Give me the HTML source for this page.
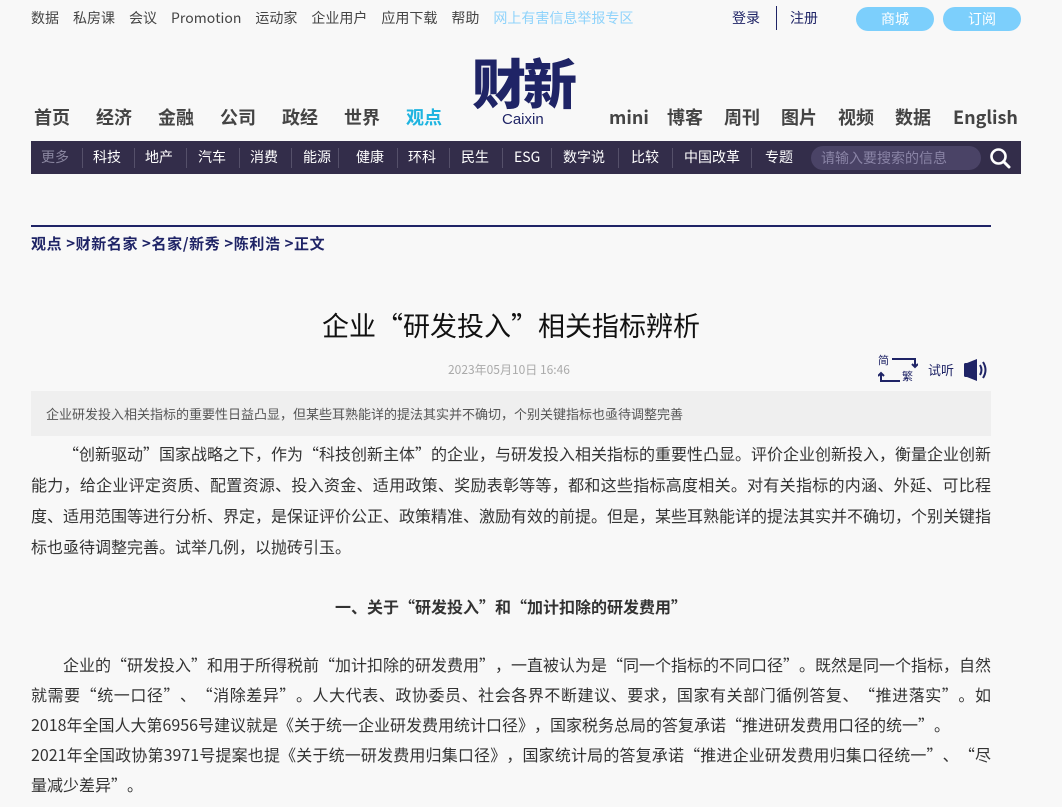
<!DOCTYPE html>
<html><head><meta charset="utf-8">
<style>
*{margin:0;padding:0;box-sizing:border-box}
body{width:1062px;height:807px;overflow:hidden;background:#f8f8f8;font-family:"Noto Sans CJK SC","Liberation Sans",sans-serif;color:#333;position:relative;text-spacing-trim:space-all;font-kerning:none}
.a{position:absolute;white-space:nowrap}
.top{top:8px;left:31px;font-size:14px;line-height:20px;color:#444}
.top span{margin-right:14px}
.logo{left:472px;top:50px;font-size:54px;font-weight:900;color:#1f2466;letter-spacing:-3px;line-height:62px}
.cx{left:502px;top:110px;font-size:15px;line-height:20px;color:#1f2466;font-family:"Liberation Sans",sans-serif}
.mn{top:105px;font-size:18px;line-height:24px;font-weight:bold;color:#444}
.bar{left:31px;top:141px;width:990px;height:33px;background:#332d4a}
.bar .it{position:absolute;top:0;line-height:33px;font-size:14px;color:#fff}
.sep{position:absolute;top:7px;width:1px;height:20px;background:#55506a}
.btn{top:7px;width:78px;height:24px;border-radius:12px;background:#7ccffc;color:#fff;font-size:14px;text-align:center;line-height:24px}
p.t{position:absolute;left:31px;width:960px;font-size:16px;text-align:justify;color:#333}
</style></head><body>
<div class="a top"><span>数据</span><span>私房课</span><span>会议</span><span>Promotion</span><span>运动家</span><span>企业用户</span><span>应用下载</span><span>帮助</span><span style="color:#8fd3fb">网上有害信息举报专区</span></div>
<div class="a" style="left:732px;top:8px;font-size:14px;line-height:20px;color:#1f2466">登录</div>
<div class="a" style="left:776px;top:6px;width:1px;height:24px;background:#1f2466"></div>
<div class="a" style="left:790px;top:8px;font-size:14px;line-height:20px;color:#1f2466">注册</div>
<div class="a btn" style="left:856px">商城</div>
<div class="a btn" style="left:943px">订阅</div>
<div class="a logo">财新</div>
<div class="a cx">Caixin</div>
<div class="a mn" style="left:34px">首页</div>
<div class="a mn" style="left:96px">经济</div>
<div class="a mn" style="left:158px">金融</div>
<div class="a mn" style="left:220px">公司</div>
<div class="a mn" style="left:282px">政经</div>
<div class="a mn" style="left:344px">世界</div>
<div class="a mn" style="left:406px;color:#1fb4e0">观点</div>
<div class="a mn" style="left:609px">mini</div>
<div class="a mn" style="left:667px">博客</div>
<div class="a mn" style="left:724px">周刊</div>
<div class="a mn" style="left:781px">图片</div>
<div class="a mn" style="left:838px">视频</div>
<div class="a mn" style="left:895px">数据</div>
<div class="a mn" style="left:953px">English</div>
<div class="a bar">
<span class="it" style="left:10px;color:#8a86a0">更多</span><i class="sep" style="left:51px"></i>
<span class="it" style="left:62px">科技</span><i class="sep" style="left:103px"></i>
<span class="it" style="left:114px">地产</span><i class="sep" style="left:155px"></i>
<span class="it" style="left:167px">汽车</span><i class="sep" style="left:208px"></i>
<span class="it" style="left:219px">消费</span><i class="sep" style="left:260px"></i>
<span class="it" style="left:272px">能源</span><i class="sep" style="left:307px"></i>
<span class="it" style="left:325px">健康</span><i class="sep" style="left:366px"></i>
<span class="it" style="left:377px">环科</span><i class="sep" style="left:418px"></i>
<span class="it" style="left:430px">民生</span><i class="sep" style="left:471px"></i>
<span class="it" style="left:483px">ESG</span><i class="sep" style="left:520px"></i>
<span class="it" style="left:532px">数字说</span><i class="sep" style="left:587px"></i>
<span class="it" style="left:600px">比较</span><i class="sep" style="left:641px"></i>
<span class="it" style="left:653px">中国改革</span><i class="sep" style="left:720px"></i>
<span class="it" style="left:734px">专题</span>
<div style="position:absolute;left:780px;top:5px;width:170px;height:24px;border-radius:12px;background:#4a4366;color:#8a84a6;font-size:14px;line-height:24px;padding-left:10px">请输入要搜索的信息</div>
<svg style="position:absolute;left:958px;top:6px" width="22" height="22" viewBox="0 0 22 22"><circle cx="9.5" cy="9.5" r="7" fill="none" stroke="#fff" stroke-width="2.6"/><path d="M14.5 14.5L20 20" stroke="#fff" stroke-width="3" stroke-linecap="round"/></svg>
</div>
<div class="a" style="left:31px;top:225px;width:960px;height:2px;background:#1f2466"></div>
<div class="a" style="left:31px;top:234px;font-size:15px;line-height:20px;font-weight:bold;color:#1f2466;letter-spacing:0.6px">观点 &gt;财新名家 &gt;名家/新秀 &gt;陈利浩 &gt;正文</div>
<div class="a" style="left:0;width:1022px;text-align:center;top:305px;font-size:27px;line-height:40px;color:#111">企业“研发投入”相关指标辨析</div>
<div class="a" style="left:448px;top:362px;font-size:12px;line-height:16px;color:#aaa">2023年05月10日 16:46</div>
<div class="a" style="left:878px;top:355px;width:40px;height:30px">
<span style="position:absolute;left:0;top:-2px;font-size:11px;line-height:14px;color:#1f2466">简</span>
<span style="position:absolute;left:24px;top:14px;font-size:11px;line-height:14px;color:#1f2466">繁</span>
<svg width="40" height="30" style="position:absolute;left:0;top:0"><path d="M14 4H37V12M34 9L37 12L40 9" fill="none" stroke="#1f2466" stroke-width="2"/><path d="M22 26H3V18M0 21L3 18L6 21" fill="none" stroke="#1f2466" stroke-width="2"/></svg></div>
<div class="a" style="left:928px;top:361px;font-size:13px;line-height:18px;color:#1f2466">试听</div>
<svg class="a" style="left:964px;top:359px" width="26" height="22" viewBox="0 0 26 22"><rect x="0" y="4" width="10" height="14" rx="1.5" fill="#1f2466"/><path d="M3 4L13 0V22L3 18Z" fill="#1f2466"/><path d="M16 6Q19 11 16 16M19 3Q24 11 19 19" fill="none" stroke="#1f2466" stroke-width="2"/></svg>
<div class="a" style="left:31px;top:391px;width:960px;height:45px;background:#efefef;font-size:13px;color:#555;line-height:45px;padding-left:15px">企业研发投入相关指标的重要性日益凸显，但某些耳熟能详的提法其实并不确切，个别关键指标也亟待调整完善</div>
<p class="t" style="top:438px;line-height:31px;text-indent:32px">“创新驱动”国家战略之下，作为“科技创新主体”的企业，与研发投入相关指标的重要性凸显。评价企业创新投入，衡量企业创新能力，给企业评定资质、配置资源、投入资金、适用政策、奖励表彰等等，都和这些指标高度相关。对有关指标的内涵、外延、可比程度、适用范围等进行分析、界定，是保证评价公正、政策精准、激励有效的前提。但是，某些耳熟能详的提法其实并不确切，个别关键指标也亟待调整完善。试举几例，以抛砖引玉。</p>
<div class="a" style="left:0;width:1022px;text-align:center;top:594px;font-size:16px;line-height:24px;font-weight:bold;color:#333">一、关于“研发投入”和“加计扣除的研发费用”</div>
<p class="t" style="top:649px;line-height:30px;text-indent:32px">企业的“研发投入”和用于所得税前“加计扣除的研发费用”，一直被认为是“同一个指标的不同口径”。既然是同一个指标，自然就需要“统一口径”、“消除差异”。人大代表、政协委员、社会各界不断建议、要求，国家有关部门循例答复、“推进落实”。如2018年全国人大第6956号建议就是《关于统一企业研发费用统计口径》，国家税务总局的答复承诺“推进研发费用口径的统一”。<br>2021年全国政协第3971号提案也提《关于统一研发费用归集口径》，国家统计局的答复承诺“推进企业研发费用归集口径统一”、“尽量减少差异”。</p>
</body></html>
